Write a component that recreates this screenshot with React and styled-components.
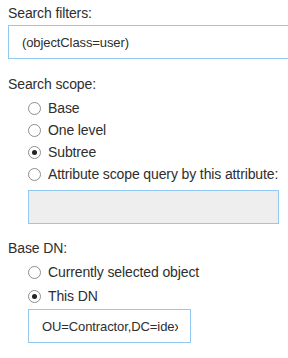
import React from "react";
import styled, { createGlobalStyle } from "styled-components";

const GlobalStyle = createGlobalStyle`
    html, body {
        margin: 0;
        padding: 0;
        background: #ffffff;
        overflow: hidden;
    }
    body {
        font-family: "Liberation Sans", Arial, sans-serif;
        font-size: 14px;
        color: #2e2e2e;
    }
`;

const Panel = styled.div`
    display: flex;
    flex-direction: column;
    padding: 5px 0 0 8px;
    width: 288px;
    box-sizing: border-box;
`;

const Section = styled.div`
    display: flex;
    flex-direction: column;
    margin-bottom: ${(p) => p.$gap || 0}px;
    overflow: hidden;
`;

const Label = styled.div`
    line-height: 17px;
    letter-spacing: -0.12px;
    margin-bottom: ${(p) => p.$gap || 0}px;
`;

const TextInput = styled.input`
    box-sizing: border-box;
    flex-shrink: 0;
    height: 34px;
    width: ${(p) => p.$width}px;
    margin: 0;
    padding: 0 12px 0 13px;
    border: 1px solid #92c9f2;
    border-radius: 0;
    background: ${(p) => (p.disabled ? "#eeeeee" : "#ffffff")};
    font-family: inherit;
    font-size: 13px;
    letter-spacing: -0.1px;
    color: #2e2e2e;
    outline: none;
`;

const Options = styled.div`
    display: flex;
    flex-direction: column;
    gap: ${(p) => p.$spacing}px;
    padding-left: 20px;
`;

const Option = styled.label`
    display: flex;
    align-items: center;
    gap: 7px;
    line-height: 17px;
    letter-spacing: -0.12px;
    white-space: nowrap;
`;

const Radio = styled.input.attrs({ type: "radio" })`
    appearance: none;
    box-sizing: border-box;
    flex-shrink: 0;
    width: 13px;
    height: 13px;
    margin: 0;
    border: 1px solid #8e8e8e;
    border-radius: 50%;
    background: #ffffff;
    display: grid;
    place-items: center;
    &:checked::after {
        content: "";
        width: 5px;
        height: 5px;
        border-radius: 50%;
        background: #222222;
    }
`;

const Nested = styled.div`
    display: flex;
    padding-left: 20px;
    margin-top: ${(p) => p.$gap}px;
`;

export default function App() {
    return (
        <>
            <GlobalStyle />
            <Panel>
                <Section $gap={17}>
                    <Label $gap={3}>Search filters:</Label>
                    <TextInput $width={300} defaultValue="(objectClass=user)" />
                </Section>
                <Section $gap={16}>
                    <Label $gap={7}>Search scope:</Label>
                    <Options $spacing={5}>
                        <Option>
                            <Radio name="scope" />
                            Base
                        </Option>
                        <Option>
                            <Radio name="scope" />
                            One level
                        </Option>
                        <Option>
                            <Radio name="scope" defaultChecked />
                            Subtree
                        </Option>
                        <Option>
                            <Radio name="scope" />
                            Attribute scope query by this attribute:
                        </Option>
                    </Options>
                    <Nested $gap={7}>
                        <TextInput $width={251} disabled />
                    </Nested>
                </Section>
                <Section>
                    <Label $gap={7}>Base DN:</Label>
                    <Options $spacing={7}>
                        <Option>
                            <Radio name="dn" />
                            Currently selected object
                        </Option>
                        <Option>
                            <Radio name="dn" defaultChecked />
                            This DN
                        </Option>
                    </Options>
                    <Nested $gap={4}>
                        <TextInput $width={163} defaultValue="OU=Contractor,DC=idexample,DC=com" />
                    </Nested>
                </Section>
            </Panel>
        </>
    );
}
